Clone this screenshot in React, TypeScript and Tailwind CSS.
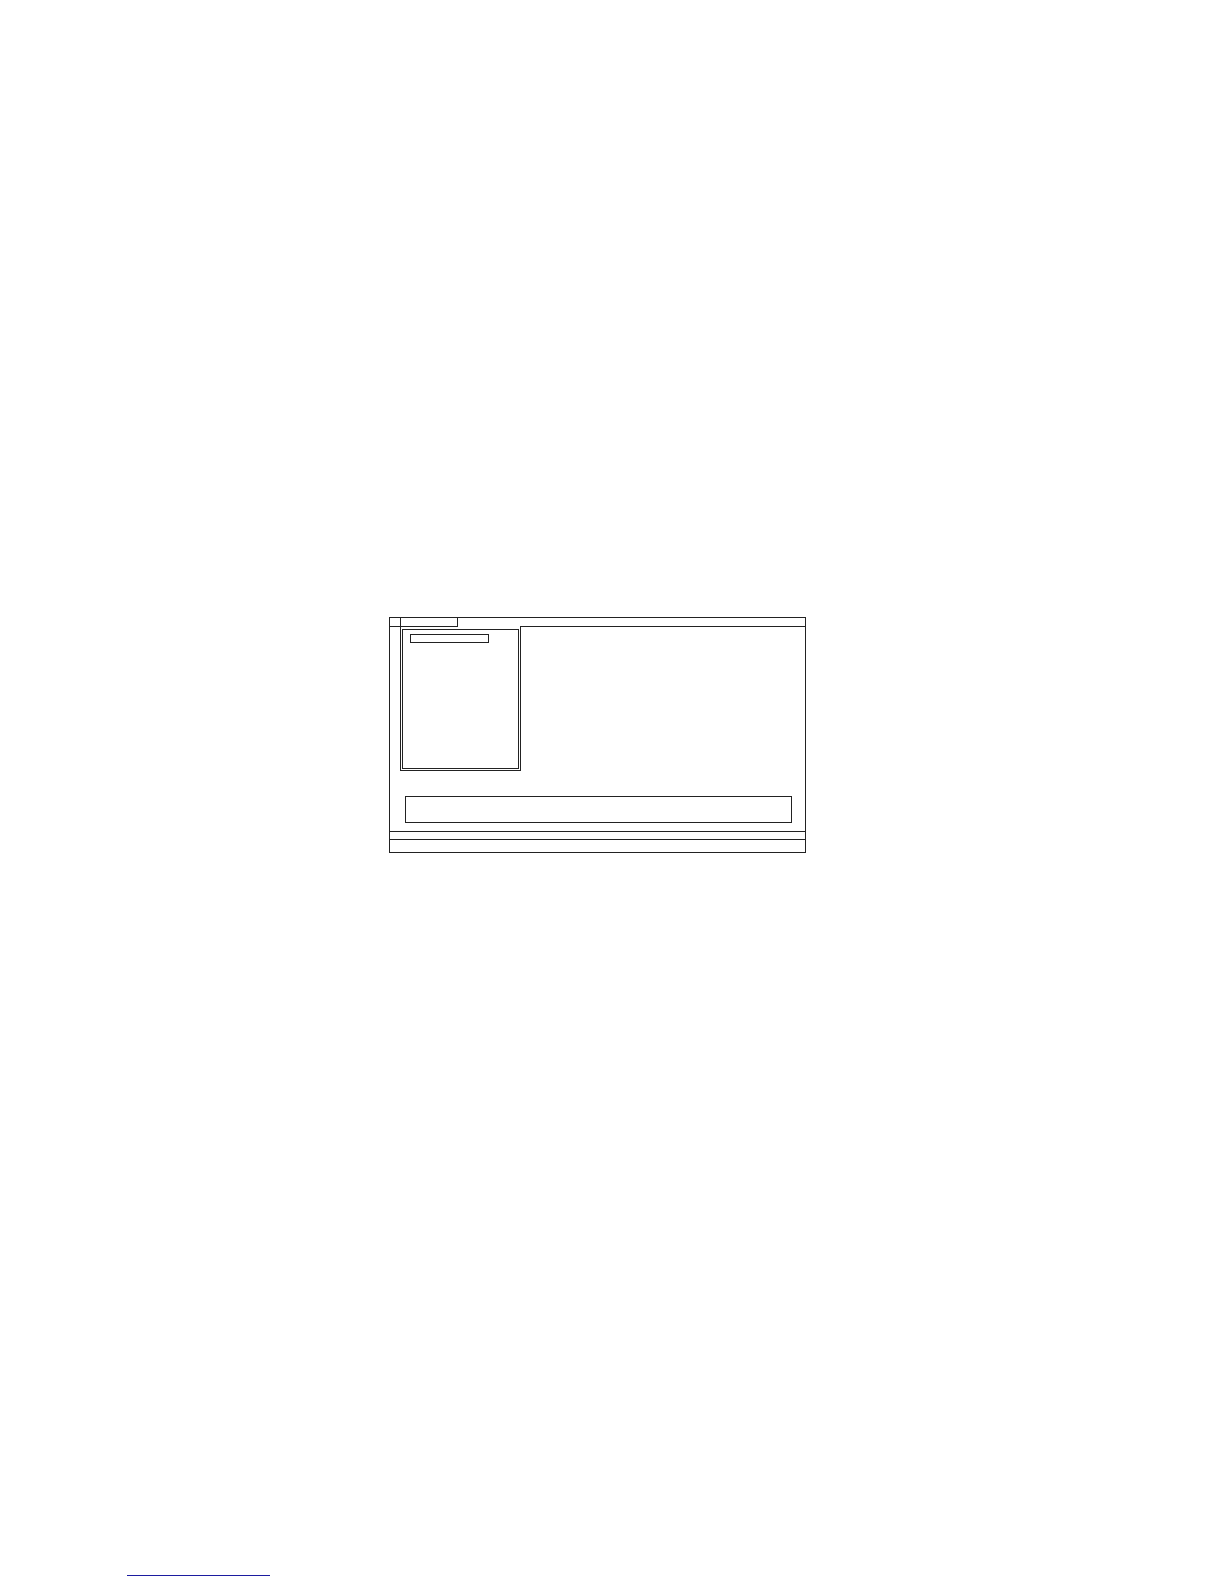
import React from 'react';

const App: React.FC = () => {
  return (
    <div className="min-h-[1584px] w-full bg-white font-['Liberation_Sans',sans-serif]">
      <div className="pt-[617px]">
        {/* window frame */}
        <div className="ml-[389px] w-[417px] border border-[#222]">
          {/* tab strip */}
          <div className="flex h-[9px]">
            <div className="w-[11px] border-r border-b border-[#222]" />
            <div className="w-[57px] border-r border-b border-[#222]" />
            <div className="w-[62px]" />
            <div className="flex-1 border-b border-[#222]" />
          </div>

          {/* tab body */}
          <div className="flex">
            <div className="w-[10px]" />
            <div className="h-[144px] w-[121px] border-r border-b border-l border-[#222] pt-[2px] pr-px pb-px pl-px">
              <div className="h-[140px] w-[117px] border border-[#222] pt-[4px] pl-[7px]">
                <div className="h-[9px] w-[79px] border border-[#222]" />
              </div>
            </div>
          </div>

          {/* text field */}
          <div className="mt-[25px] ml-[15px] h-[27px] w-[387px] border border-[#222]" />

          {/* status rows */}
          <div className="mt-[8px] h-[8px] border-t border-[#222]" />
          <div className="h-[13px] border-t border-[#222]" />
        </div>

        <a href="#" className="mt-[722px] ml-[127px] block h-px w-[143px] bg-[#1c1ca0]" aria-label="link" />
      </div>
    </div>
  );
};

export default App;
